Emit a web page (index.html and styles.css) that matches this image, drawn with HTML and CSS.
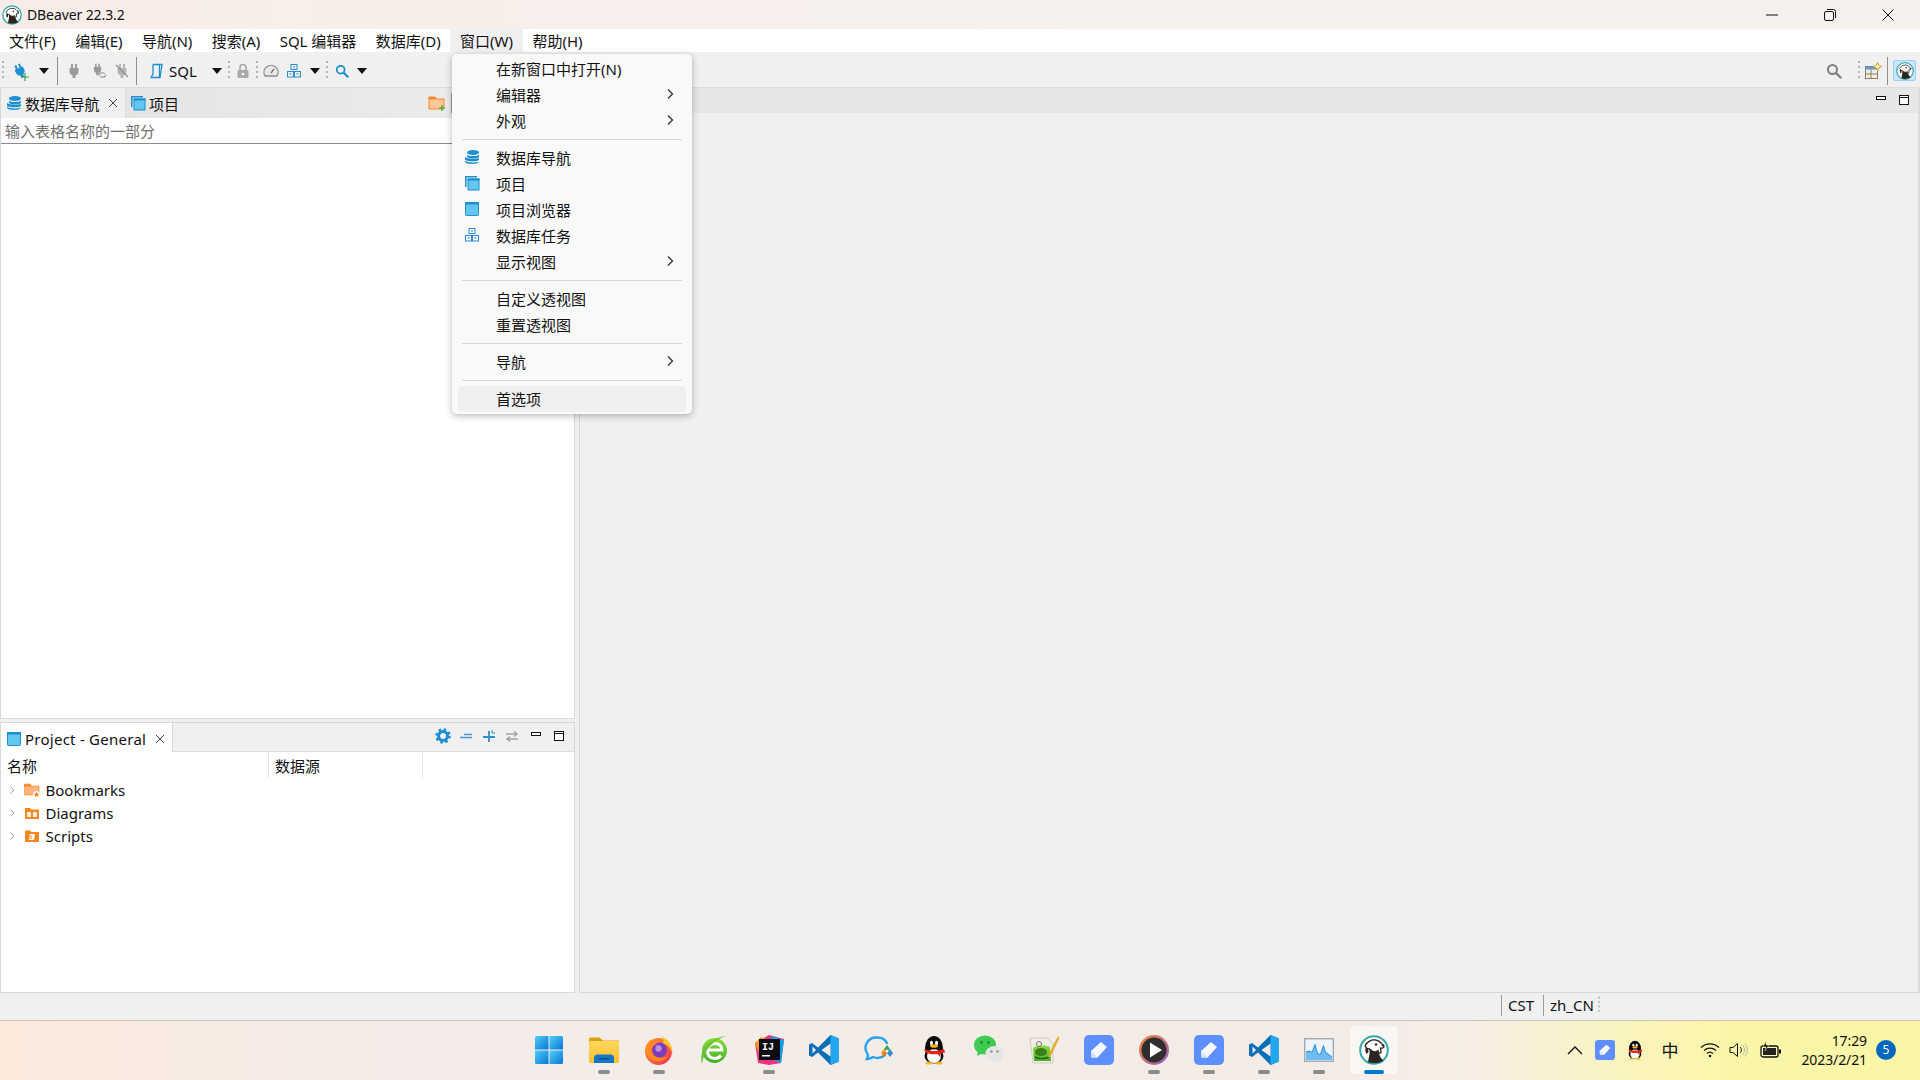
FILE: index.html
```html
<!DOCTYPE html>
<html lang="zh-CN">
<head>
<meta charset="utf-8">
<title>DBeaver 22.3.2</title>
<link rel="stylesheet" href="styles.css">
</head>
<body>
<svg class="defs" xmlns="http://www.w3.org/2000/svg">
  <defs>
    <linearGradient id="gWin" x1="0" y1="0" x2="1" y2="1"><stop offset="0" stop-color="#4fd0fb"/><stop offset="1" stop-color="#0a74d2"/></linearGradient>
    <linearGradient id="gFolder" x1="0" y1="0" x2="0" y2="1"><stop offset="0" stop-color="#ffd75e"/><stop offset="1" stop-color="#fbc02d"/></linearGradient>
    <linearGradient id="gFox" x1="0" y1="0" x2="1" y2="1"><stop offset="0" stop-color="#ff9a25"/><stop offset="1" stop-color="#f0305a"/></linearGradient>
    <linearGradient id="gRing" x1="0" y1="0" x2="1" y2="1"><stop offset="0" stop-color="#f58a2e"/><stop offset="1" stop-color="#8f5ac8"/></linearGradient>
    <linearGradient id="gGreen" x1="0" y1="0" x2="0" y2="1"><stop offset="0" stop-color="#8fdc3c"/><stop offset="1" stop-color="#45b02a"/></linearGradient>

    <symbol id="plug" viewBox="0 0 16 16"><path fill="currentColor" d="M5 1h2v4h2V1h2v4h1.500v3.500a4 4 0 0 1-3 3.700V15h-3v-2.800a4 4 0 0 1-3-3.700V5H5z"/></symbol>
    <symbol id="db" viewBox="0 0 16 16"><g fill="#1d8fd1"><ellipse cx="9" cy="3.500" rx="6" ry="2.500"/><path d="M3 5.500c1 2 11 2 12 0v2.300c-1 2.200-11 2.200-12 0z"/><path d="M1 7.800c1 2 12 2.600 14 1v2.200c-2 2-13 1.600-14-.6z"/><path d="M1 11.500c1 2 12 2.600 14 1V13c-1 2.500-13 2.500-14 0z"/></g></symbol>
    <symbol id="proj" viewBox="0 0 16 16"><path fill="none" stroke="#1d8fd1" stroke-width="1.500" d="M1.800 12V1.800H13"/><rect x="4" y="4" width="11" height="11" fill="#63c6ee" stroke="#1d8fd1"/><rect x="3.500" y="3.500" width="12" height="2" fill="#1d8fd1"/></symbol>
    <symbol id="win" viewBox="0 0 16 16"><rect x="1.500" y="1.500" width="13" height="13" rx="1" fill="#63c6ee" stroke="#1d8fd1"/><rect x="1" y="1" width="14" height="2.500" fill="#1d8fd1"/></symbol>
    <symbol id="boxes" viewBox="0 0 16 16"><g fill="none" stroke="#2c8ccf"><rect x="5" y="1.500" width="6" height="5"/><rect x="1.500" y="8.500" width="6" height="5.500"/><rect x="8.500" y="8.500" width="6" height="5.500"/><path d="M7 4h2M3.500 11h2M10.500 11h2"/></g></symbol>
    <symbol id="sqlfile" viewBox="0 0 16 16"><g fill="none" stroke="#1d8fd1" stroke-width="1.300"><path d="M5 1.500h9L12 14.500H2.500"/><path d="M5 1.500V11l-2 3.500M11.500 2v12"/></g></symbol>
    <symbol id="lens" viewBox="0 0 16 16"><circle cx="6.500" cy="6.500" r="4.500" fill="none" stroke="currentColor" stroke-width="2"/><path d="M10 10l4.500 4.500" stroke="currentColor" stroke-width="2.400" stroke-linecap="round"/></symbol>
    <symbol id="caret" viewBox="0 0 10 6"><path d="M0 0h10L5 6z" fill="#111"/></symbol>
    <symbol id="chev" viewBox="0 0 8 12"><path d="M2 1.500L6.500 6 2 10.500" fill="none" stroke="#333" stroke-width="1.300"/></symbol>
    <symbol id="x" viewBox="0 0 10 10"><path d="M1 1l8 8M9 1l-8 8" stroke="#444" stroke-width="1"/></symbol>
    <symbol id="vmin" viewBox="0 0 12 12"><rect x="1.500" y="2.500" width="9" height="3" fill="#fff" stroke="#111"/></symbol>
    <symbol id="vmax" viewBox="0 0 12 12"><rect x="1.500" y="1.500" width="9" height="9" fill="#fff" stroke="#111"/><path d="M1.500 3.500h9" stroke="#111"/></symbol>
    <symbol id="grip" viewBox="0 0 3 24"><g fill="#b9b3a8"><rect y="2" width="2" height="2"/><rect y="7" width="2" height="2"/><rect y="12" width="2" height="2"/><rect y="17" width="2" height="2"/></g></symbol>

    <symbol id="t-win" viewBox="0 0 30 30"><g fill="url(#gWin)"><path d="M1 2.500A1.500 1.500 0 0 1 2.500 1H14.500V14.500H1z"/><path d="M15.500 1H27.500A1.500 1.500 0 0 1 29 2.500V14.500H15.500z"/><path d="M1 15.500H14.500V29H2.500A1.500 1.500 0 0 1 1 27.500z"/><path d="M15.500 15.500H29V27.500A1.500 1.500 0 0 1 27.500 29H15.500z"/></g></symbol>
    <symbol id="t-folder" viewBox="0 0 30 30"><path d="M0 4a1.500 1.500 0 0 1 1.500-1.500h9L14 5.500h16V10H0z" fill="#dba10e"/><rect y="6" width="30" height="22" rx="1.500" fill="url(#gFolder)"/><path d="M5 28v-5a3.500 3.500 0 0 1 3.500-3.500h13a3.500 3.500 0 0 1 3.500 3.500v5z" fill="#1577c4"/><rect x="10" y="23" width="10" height="1.500" fill="#0b4f8c"/></symbol>
    <symbol id="t-fox" viewBox="0 0 30 30"><circle cx="14.500" cy="16.500" r="13.500" fill="url(#gFox)"/><path d="M17 1c7 3 12 9 11.500 17.500-1.500-5-5-9-9.500-10 1.500-2.500 0-5-2-7.500z" fill="#ffc62e"/><circle cx="15.500" cy="15" r="7.500" fill="#7b3cbb"/><circle cx="14.500" cy="13.500" r="3.200" fill="#c08ae0"/><path d="M1.500 13c1-4.500 3.500-7 6-8-.5 2.500 1.500 3.500 7 4-4 .5-6.500 2-7 5.500 0 4.500 4 8.500 9.500 8.500 3 0 5.500-1 7-2.500-2 4-6 6-10 5.500C7 26 .5 20 1.500 13z" fill="#ff8a1f"/></symbol>
    <symbol id="t-ie" viewBox="0 0 30 30"><circle cx="15" cy="15.500" r="14" fill="#eef2ea"/><circle cx="15.500" cy="15.500" r="12.500" fill="url(#gGreen)"/><path d="M9 15h14c0-9-14.500-8.500-14.500 1 0 8 9.500 9.500 13.500 4.500" fill="none" stroke="#fff" stroke-width="3"/><path d="M3 29C-1 16 10 3 27 1 14 5 5 15 3 29z" fill="#6cc33a"/></symbol>
    <symbol id="t-ij" viewBox="0 0 30 30"><path d="M1 8L15 0l15 4-3 24-12 2-11-2z" fill="#f0337f"/><path d="M17 1l13 4-3 23-6-2z" fill="#0e9fe6"/><path d="M1 8l6-6 8 3L5 18z" fill="#ff9b1c"/><rect x="5" y="4" width="21" height="21" fill="#0c0d12"/><rect x="8" y="20" width="8" height="1.500" fill="#fff"/></symbol>
    <symbol id="t-vs" viewBox="0 0 30 30"><path d="M21.500 0L9 12.500 3 8 0 9.500v11L3 22l6-4.500L21.500 30 30 26.500V3.500z" fill="#0b6fb8"/><path d="M21.500 0L30 3.500v23L21.500 30z" fill="#23a6ee"/><path d="M21.500 8.500L12.500 15l9 6.500z" fill="#f2ece8"/><path d="M3.500 11.500L7 15l-3.500 3.500z" fill="#f2ece8"/></symbol>
    <symbol id="t-msg" viewBox="0 0 30 30"><path d="M13 2.500A10.500 10.500 0 0 0 3.500 19c.5 1 .5 2.500-.5 5 3-.3 5-1.300 6-2 4 1.500 9 .8 12-2M23 8A10.500 10.500 0 0 0 13 2.500" fill="none" stroke="#29a0f0" stroke-width="2.400" stroke-linecap="round"/><path d="M23 10l3 4-3 4-3-4z" fill="#3aa84a"/><path d="M20 14l3 4-3 4-3-4z" fill="#f29b1d"/><path d="M26 14l3 4-3 4-3-4z" fill="#2f8be0"/><path d="M23 18l-3 4h-1l1-5z" fill="#ef6b1c"/><circle cx="23" cy="16" r="1.500" fill="#f2ece8"/></symbol>
    <symbol id="t-qq" viewBox="0 0 30 30"><ellipse cx="15" cy="13" rx="9" ry="12" fill="#0b0b0b"/><ellipse cx="15" cy="21" rx="9.500" ry="7.500" fill="#0b0b0b"/><ellipse cx="15" cy="21" rx="7" ry="7" fill="#fff"/><ellipse cx="15" cy="9.500" rx="5" ry="5" fill="#0b0b0b"/><ellipse cx="12.500" cy="8" rx="1.500" ry="2.200" fill="#fff"/><ellipse cx="17.500" cy="8" rx="1.500" ry="2.200" fill="#fff"/><ellipse cx="15" cy="11" rx="4" ry="1.800" fill="#f4b21f"/><path d="M5 14c5 2.500 15 2.500 20 0l1 3.500-5 1 .5 4-3-3.500c-3 .7-7 .5-12-1.500z" fill="#e3231a"/><ellipse cx="10" cy="28" rx="3.500" ry="1.500" fill="#f4b21f"/><ellipse cx="20" cy="28" rx="3.500" ry="1.500" fill="#f4b21f"/></symbol>
    <symbol id="t-wx" viewBox="0 0 30 30"><ellipse cx="11" cy="10" rx="11" ry="9.500" fill="#3ecb54"/><path d="M4 16l-1 5 6-3z" fill="#3ecb54"/><circle cx="7.500" cy="7.500" r="1.400" fill="#1d8f34"/><circle cx="14.500" cy="7.500" r="1.400" fill="#1d8f34"/><ellipse cx="20.500" cy="18.500" rx="9" ry="7.500" fill="#e3e5e6"/><path d="M25 24l2 4-6-2z" fill="#e3e5e6"/><circle cx="17.500" cy="16.500" r="1.200" fill="#8f9497"/><circle cx="23.500" cy="16.500" r="1.200" fill="#8f9497"/></symbol>
    <symbol id="t-npp" viewBox="0 0 30 30"><path d="M1 3h17l6 5v20H4z" fill="#efeee2" stroke="#b8b6a4" stroke-width=".6"/><path d="M4 13c5-3 10-3 17-1l1 14H5z" fill="url(#gGreen)"/><ellipse cx="12" cy="17" rx="6" ry="4" fill="#3a7d1c"/><circle cx="10" cy="9" r="2.500" fill="none" stroke="#777"/><path d="M6 22c4 2 10 2 14 0" stroke="#2a5a10" stroke-width="1.500" fill="none"/><path d="M29 1l-9 18-1.500 4 3.500-2.500L30.500 3z" fill="#e3a92a"/></symbol>
    <symbol id="t-note" viewBox="0 0 30 30"><rect width="30" height="30" rx="5" fill="#5d8fff"/><path d="M17 7l6 5-9.500 10.500H7.500L7 16z" fill="#fff" opacity=".95"/><path d="M7.500 22.500L7 16l6.500 6.500z" fill="#d6e3ff"/></symbol>
    <symbol id="t-play" viewBox="0 0 30 30"><circle cx="15" cy="15" r="15" fill="url(#gRing)"/><circle cx="15" cy="15" r="12.500" fill="#2f2d2d"/><path d="M11 7.500L23 15l-12 7.500z" fill="#fff"/></symbol>
    <symbol id="t-chart" viewBox="0 0 30 30"><rect x=".7" y="3.700" width="28.600" height="22.600" fill="#eef4fb" stroke="#a4a9ae" stroke-width="1.400"/><path d="M2 24v-7l4-1 2 1.500 3-8 2.500 9 3 1 3-9 2 7 2.500 1.500 4 3V25H2z" fill="#6ebdf2"/><path d="M2 17l4-1 2 1.500 3-8 2.500 9 3 1 3-9 2 7 2.500 1.500 4 3" fill="none" stroke="#2b8fd8"/></symbol>
    <symbol id="beaver" viewBox="0 0 30 30"><circle cx="15" cy="15" r="13.800" fill="#fff" stroke="#35a8ac" stroke-width="2"/><path d="M9 27l1.500-8c.3-2 .3-4-.5-6l9 4 3 6 2.500 2.500C19.500 28.500 14 29 9 27z" fill="#2b2421"/><path d="M6 11c1.500-4 6-6.500 10.500-6 2.500.3 4.500 1.500 6 3.500 1.500.8 2.500 2 2.500 3 0 1.500-2 2-3.500 1.500l.5 4.500-2 1-1-3-2 1.500c-3 0-5-1-6.500-3-1.500 0-3-.5-4.500-3z" fill="#fff" stroke="#2b2421" stroke-width="1.300"/><path d="M6.500 13c-.5 2 0 4 1 6l2-2-.5-3.500z" fill="#2b2421"/><circle cx="17" cy="9.500" r="1.200" fill="#2b2421"/><ellipse cx="24" cy="10.500" rx="1.400" ry="1" fill="#2b2421"/></symbol>

    <symbol id="f-book" viewBox="0 0 16 16"><path d="M0 3a1 1 0 0 1 1-1h5l2 2h7v9H1a1 1 0 0 1-1-1z" fill="#fdb37b" stroke="#f5871f" stroke-width=".6"/><path d="M0 2.500h6l1.500 2H0z" fill="#f5871f"/><circle cx="12.500" cy="12.500" r="3.500" fill="#fff"/><path d="M12.500 9.800l.9 1.800 1.900.2-1.400 1.300.4 1.900-1.800-1-1.800 1 .4-1.900-1.400-1.300 1.900-.2z" fill="#f5871f"/></symbol>
    <symbol id="f-dia" viewBox="0 0 16 16"><path d="M1 3h5l1.500 1.500H15V14H1z" fill="#f5871f"/><rect x="2.800" y="6.500" width="4.500" height="6" fill="#fff" stroke="#f5871f"/><rect x="8.700" y="6.500" width="4.500" height="6" fill="#fff" stroke="#f5871f"/></symbol>
    <symbol id="f-scr" viewBox="0 0 16 16"><path d="M1 2.500h5L7.500 4H15v10H1z" fill="#f5871f"/><path d="M6 6h5l-1 6H5z" fill="#fff"/><path d="M7 7.500v3.500" stroke="#f5871f"/></symbol>
    <symbol id="f-new" viewBox="0 0 18 18"><path d="M1 3h6l2 2h7v10H1z" fill="#fdc79a" stroke="#f5871f"/><rect x="1" y="3" width="7" height="2.500" fill="#f5871f"/><path d="M14 11v6M11 14h6" stroke="#27a844" stroke-width="1.200"/></symbol>
    <symbol id="persp" viewBox="0 0 18 18"><rect x="1.500" y="4.500" width="12" height="12" fill="#f3eee0" stroke="#8a7f68"/><rect x="1.500" y="4.500" width="12" height="3" fill="#5a9bd4"/><path d="M7 7.500v9M1.500 12h12" stroke="#8a7f68"/><path d="M13.500 .5l1.200 2.700 2.800 1.300-2.800 1.300-1.200 2.700-1.200-2.700L9.500 4.500l2.800-1.300z" fill="#fff3c4" stroke="#d8a320"/></symbol>
  </defs>
</svg>

<div class="app">
  <header class="titlebar">
    <svg class="tb-logo"><use href="#beaver"/></svg>
    <span class="title-text">DBeaver 22.3.2</span>
    <span class="spacer"></span>
    <div class="winctl">
      <span class="winbtn"><svg class="wi" viewBox="0 0 12 12"><path d="M0 6h12" stroke="#111"/></svg></span>
      <span class="winbtn"><svg class="wi" viewBox="0 0 12 12"><rect x=".5" y="2.500" width="9" height="9" rx="1.500" fill="none" stroke="#111"/><path d="M3 .5h6.500a2 2 0 0 1 2 2V9" fill="none" stroke="#111"/></svg></span>
      <span class="winbtn"><svg class="wi" viewBox="0 0 12 12"><path d="M.5.500l11 11M11.500.500l-11 11" stroke="#111"/></svg></span>
    </div>
  </header>

  <nav class="menubar">
    <span class="mi">文件(F)</span>
    <span class="mi">编辑(E)</span>
    <span class="mi">导航(N)</span>
    <span class="mi">搜索(A)</span>
    <span class="mi">SQL 编辑器</span>
    <span class="mi">数据库(D)</span>
    <span class="mi mi-open">窗口(W)</span>
    <span class="mi">帮助(H)</span>
  </nav>

  <div class="toolbar">
    <span class="cell w4"><svg class="grip"><use href="#grip"/></svg></span>
    <span class="cell w30 pl-add"><svg class="i16 c-blue tiltb"><use href="#plug"/></svg><svg class="addmark" viewBox="0 0 8 8"><path d="M4 0v8M0 4h8" stroke="#27a844" stroke-width="1.200"/></svg></span>
    <span class="cell w18"><svg class="caret"><use href="#caret"/></svg></span>
    <span class="cell w8"><i class="sep"></i></span>
    <span class="cell w26"><svg class="i16 c-gray"><use href="#plug"/></svg></span>
    <span class="cell w24"><svg class="i16" viewBox="0 0 16 16"><use href="#plug" width="13" height="13" class="c-gray"/><path d="M8 12a3.500 3.500 0 0 1 6-1M15 12a3.500 3.500 0 0 1-6 1" fill="none" stroke="#8f8f8f" stroke-width="1.100"/></svg></span>
    <span class="cell w22"><svg class="i16" viewBox="0 0 16 16"><use href="#plug" class="c-lgray"/><path d="M2 2l12 12" stroke="#8f8f8f" stroke-width="1.300"/></svg></span>
    <span class="cell w6"><i class="sep"></i></span>
    <span class="sqlgroup"><svg class="i16"><use href="#sqlfile"/></svg><span class="sqltext">SQL</span></span>
    <span class="cell w20"><svg class="caret"><use href="#caret"/></svg></span>
    <span class="cell w4"><svg class="grip"><use href="#grip"/></svg></span>
    <span class="cell w24"><svg class="i16" viewBox="0 0 16 16"><rect x="2.500" y="7" width="11" height="8" rx="1.500" fill="#a9a9a9"/><path d="M5 7V4.500a3 3 0 0 1 6 0V7" fill="none" stroke="#a9a9a9" stroke-width="1.600"/><circle cx="8" cy="11" r="1.300" fill="#fff"/></svg></span>
    <span class="cell w4"><svg class="grip"><use href="#grip"/></svg></span>
    <span class="cell w24"><svg class="i16" viewBox="0 0 16 16"><path d="M2 13a7 7 0 1 1 12 0z" fill="#e8e8e8" stroke="#8f8f8f" stroke-width="1.300"/><path d="M8 10l3-4" stroke="#777" stroke-width="1.300"/></svg></span>
    <span class="cell w22"><svg class="i16"><use href="#boxes"/></svg></span>
    <span class="cell w20"><svg class="caret"><use href="#caret"/></svg></span>
    <span class="cell w4"><svg class="grip"><use href="#grip"/></svg></span>
    <span class="cell w26"><svg class="i14 c-blue"><use href="#lens"/></svg></span>
    <span class="cell w14"><svg class="caret"><use href="#caret"/></svg></span>
    <span class="spacer"></span>
    <span class="cell w24"><svg class="i16 c-dgray"><use href="#lens"/></svg></span>
    <span class="cell w11"></span>
    <span class="cell w4"><svg class="grip"><use href="#grip"/></svg></span>
    <span class="cell w24"><svg class="i18"><use href="#persp"/></svg></span>
    <span class="cell w4"><i class="sep"></i></span>
    <span class="cell w4"></span>
    <span class="persp-active"><svg class="i18"><use href="#beaver"/></svg></span>
  </div>

  <main class="workbench">
    <div class="leftcol">
      <section class="pane pane-nav">
        <div class="tabstrip">
          <span class="tab tab-active tab-nav"><svg class="i16"><use href="#db"/></svg><span class="tablabel">数据库导航</span><svg class="closex"><use href="#x"/></svg></span>
          <span class="tab tab-proj"><svg class="i16"><use href="#proj"/></svg><span class="tablabel">项目</span></span>
          <span class="spacer"></span>
          <span class="tabaction"><svg class="i18"><use href="#f-new"/></svg><i class="tabsep"></i></span>
        </div>
        <div class="filter">输入表格名称的一部分</div>
        <div class="pane-body"></div>
      </section>
      <section class="pane pane-project">
        <div class="tabstrip2">
          <span class="tab2"><svg class="i16"><use href="#win"/></svg><span class="tablabel">Project - General</span><svg class="closex"><use href="#x"/></svg></span>
          <span class="spacer"></span>
          <span class="viewtools">
            <svg class="i16" viewBox="0 0 16 16"><circle cx="8" cy="8" r="4.500" fill="none" stroke="#1d8fd1" stroke-width="3"/><circle cx="8" cy="8" r="6.500" fill="none" stroke="#1d8fd1" stroke-width="2.500" stroke-dasharray="2.500 2.600"/></svg>
            <svg class="i16" viewBox="0 0 16 16"><path d="M2 9.500h12M6 6.500h8" stroke="#4a9ad4" stroke-width="1.600"/></svg>
            <svg class="i16" viewBox="0 0 16 16"><path d="M2 9h12M8 3v11" stroke="#2f8fd0" stroke-width="1.800"/><path d="M11 2v3h3" fill="none" stroke="#2f8fd0"/></svg>
            <svg class="i16" viewBox="0 0 16 16"><path d="M2 6h10M10 3.500L13 6l-3 2.500M14 11H4M6 8.500L3 11l3 2.500" fill="none" stroke="#a3a3a3" stroke-width="1.500"/></svg>
            <svg class="i12"><use href="#vmin"/></svg>
            <svg class="i12"><use href="#vmax"/></svg>
          </span>
        </div>
        <div class="colhead">
          <span class="col col-name">名称</span>
          <span class="col col-ds">数据源</span>
          <span class="col col-rest"></span>
        </div>
        <div class="treerow"><svg class="twisty"><use href="#chev"/></svg><svg class="i16"><use href="#f-book"/></svg><span>Bookmarks</span></div>
        <div class="treerow"><svg class="twisty"><use href="#chev"/></svg><svg class="i16"><use href="#f-dia"/></svg><span>Diagrams</span></div>
        <div class="treerow"><svg class="twisty"><use href="#chev"/></svg><svg class="i16"><use href="#f-scr"/></svg><span>Scripts</span></div>
      </section>
    </div>
    <section class="editor">
      <div class="editor-head">
        <svg class="i12"><use href="#vmin"/></svg>
        <svg class="i12"><use href="#vmax"/></svg>
      </div>
    </section>
  </main>

  <footer class="statusbar">
    <span class="st st-a">CST</span>
    <span class="st st-b">zh_CN</span>
    <svg class="stgrip"><use href="#grip"/></svg>
  </footer>

  <div class="taskbar">
    <span></span>
    <div class="apps">
      <span class="app-i"><svg class="ti"><use href="#t-win"/></svg></span>
      <span class="app-i run"><svg class="ti"><use href="#t-folder"/></svg></span>
      <span class="app-i run"><svg class="ti"><use href="#t-fox"/></svg></span>
      <span class="app-i"><svg class="ti"><use href="#t-ie"/></svg></span>
      <span class="app-i run"><svg class="ti" viewBox="0 0 30 30"><use href="#t-ij" width="30" height="30"/><text x="8" y="15" class="ijtext">IJ</text></svg></span>
      <span class="app-i"><svg class="ti"><use href="#t-vs"/></svg></span>
      <span class="app-i"><svg class="ti"><use href="#t-msg"/></svg></span>
      <span class="app-i"><svg class="ti"><use href="#t-qq"/></svg></span>
      <span class="app-i"><svg class="ti"><use href="#t-wx"/></svg></span>
      <span class="app-i"><svg class="ti"><use href="#t-npp"/></svg></span>
      <span class="app-i"><svg class="ti"><use href="#t-note"/></svg></span>
      <span class="app-i run"><svg class="ti"><use href="#t-play"/></svg></span>
      <span class="app-i run"><svg class="ti"><use href="#t-note"/></svg></span>
      <span class="app-i run"><svg class="ti"><use href="#t-vs"/></svg></span>
      <span class="app-i run"><svg class="ti"><use href="#t-chart"/></svg></span>
      <span class="app-i active"><svg class="ti"><use href="#beaver"/></svg></span>
    </div>
    <div class="tray">
      <svg class="tr-chev" viewBox="0 0 16 10"><path d="M1 9l7-7 7 7" fill="none" stroke="#111" stroke-width="1.300"/></svg>
      <svg class="tr-20"><use href="#t-note"/></svg>
      <svg class="tr-20 tr-qq"><use href="#t-qq"/></svg>
      <span class="ime">中</span>
      <svg class="tr-wifi" viewBox="0 0 20 16"><path d="M1 5.500a13 13 0 0 1 18 0M4 8.500a9 9 0 0 1 12 0M7 11.500a4.500 4.500 0 0 1 6 0" fill="none" stroke="#111" stroke-width="1.200"/><circle cx="10" cy="14" r="1.300" fill="#111"/></svg>
      <svg class="tr-vol" viewBox="0 0 20 16"><path d="M1 5.500h3L8.500 1.500v13L4 10.500H1z" fill="none" stroke="#111"/><path d="M11 5a4 4 0 0 1 0 6" fill="none" stroke="#222"/><path d="M13.500 3a7 7 0 0 1 0 10M16 1.500a10 10 0 0 1 0 13" fill="none" stroke="#b9b9a0"/></svg>
      <svg class="tr-bat" viewBox="0 0 22 18"><rect x="1" y="5" width="17" height="11" rx="2" fill="#fff8b0" stroke="#111" stroke-width="1.300"/><rect x="3" y="7" width="13" height="7" fill="#222"/><rect x="19" y="8.500" width="2" height="4" fill="#111"/><path d="M6 0L3 6h3l-1 4 4-6H6z" fill="#111" stroke="#faf6a8" stroke-width=".5"/></svg>
      <div class="clock"><span>17:29</span><span>2023/2/21</span></div>
      <span class="notif">5</span>
    </div>
  </div>

  <div class="popup">
    <div class="p-row p-first"><span class="p-slot"></span>在新窗口中打开(N)</div>
    <div class="p-row"><span class="p-slot"></span>编辑器<svg class="p-chev"><use href="#chev"/></svg></div>
    <div class="p-row"><span class="p-slot"></span>外观<svg class="p-chev"><use href="#chev"/></svg></div>
    <div class="p-sep"></div>
    <div class="p-row"><span class="p-slot"><svg class="i16"><use href="#db"/></svg></span>数据库导航</div>
    <div class="p-row"><span class="p-slot"><svg class="i16"><use href="#proj"/></svg></span>项目</div>
    <div class="p-row"><span class="p-slot"><svg class="i16"><use href="#win"/></svg></span>项目浏览器</div>
    <div class="p-row"><span class="p-slot"><svg class="i16"><use href="#boxes"/></svg></span>数据库任务</div>
    <div class="p-row"><span class="p-slot"></span>显示视图<svg class="p-chev"><use href="#chev"/></svg></div>
    <div class="p-sep"></div>
    <div class="p-row"><span class="p-slot"></span>自定义透视图</div>
    <div class="p-row"><span class="p-slot"></span>重置透视图</div>
    <div class="p-sep"></div>
    <div class="p-row"><span class="p-slot"></span>导航<svg class="p-chev"><use href="#chev"/></svg></div>
    <div class="p-sep"></div>
    <div class="p-row p-hot"><span class="p-slot"></span>首选项</div>
  </div>
</div>
</body>
</html>
```

FILE: styles.css
```css
* { box-sizing: border-box; }
html, body { margin: 0; padding: 0; }
body {
  font-family: "Noto Sans", "Noto Sans CJK SC", sans-serif;
  font-size: 15px;
  color: #111;
  overflow: hidden;
}
.defs { display: block; width: 0; height: 0; }
.app { position: relative; width: 1920px; height: 1080px; display: flex; flex-direction: column; background: #f0f0f0; overflow: hidden; }
.spacer { flex: 1; }

.titlebar { height: 29px; flex: none; display: flex; align-items: center; background: linear-gradient(90deg, #f8ece8, #f5f1ed 60%); padding-left: 2px; }
.tb-logo { width: 20px; height: 20px; }
.title-text { margin-left: 5px; font-size: 14px; letter-spacing: -0.1px; }
.winctl { display: flex; height: 29px; padding-right: 3px; }
.winbtn { width: 58px; display: flex; align-items: center; justify-content: center; }
.wi { width: 12px; height: 12px; }

.menubar { height: 23px; flex: none; display: flex; align-items: center; background: #fff; }
.mi { height: 23px; padding: 0 9.7px; display: flex; align-items: center; white-space: nowrap; }
.mi:first-child { padding-left: 9px; }
.mi-open { background: #f0f0f0; }

.toolbar { height: 36px; flex: none; display: flex; align-items: center; padding: 2px 4px 0 1px; background: #f0f0f0; border-bottom: 1px solid #dcdcdc; }
.cell { display: flex; align-items: center; justify-content: center; height: 30px; flex: none; }
.w4 { width: 4px; } .w6 { width: 6px; } .w8 { width: 8px; } .w11 { width: 11px; } .w14 { width: 14px; }
.w18 { width: 18px; } .w20 { width: 20px; } .w22 { width: 22px; } .w24 { width: 24px; } .w26 { width: 26px; } .w30 { width: 30px; }
.sep { display: block; width: 1px; height: 28px; background: #8f8f8f; }
.grip { width: 3px; height: 24px; flex: none; }
.caret { width: 10px; height: 6px; }
.i12 { width: 12px; height: 12px; flex: none; }
.i14 { width: 14px; height: 14px; flex: none; }
.i16 { width: 16px; height: 16px; flex: none; }
.i18 { width: 18px; height: 18px; flex: none; }
.c-blue { color: #1d8fd1; } .c-gray { color: #9a9a9a; } .c-lgray { color: #b5b5b5; } .c-dgray { color: #7f7f7f; }
.tiltb { transform: rotate(-25deg); }
.pl-add { position: relative; }
.addmark { position: absolute; left: 16px; top: 17px; width: 8px; height: 8px; }
.sqlgroup { display: flex; align-items: center; width: 68px; padding-left: 9px; flex: none; }
.sqltext { margin-left: 5px; font-size: 15px; }
.persp-active { width: 23px; height: 21px; display: flex; align-items: center; justify-content: center; background: #cbe6fb; border: 1px solid #99d1ff; border-radius: 2px; flex: none; }

.workbench { flex: 1; display: flex; min-height: 0; gap: 4px; }
.leftcol { width: 575px; flex: none; display: flex; flex-direction: column; gap: 3px; }
.pane { background: #fff; border: 1px solid #d8d8d8; border-top: 0; display: flex; flex-direction: column; }
.pane-nav { height: 631px; flex: none; }
.pane-project { flex: 1; border-top: 1px solid #d8d8d8; }

.tabstrip { height: 30px; flex: none; display: flex; align-items: stretch; background: linear-gradient(90deg, #e2e2e2, #ededed); }
.tab { display: flex; align-items: center; white-space: nowrap; }
.tab-nav { width: 125px; padding-left: 5px; background: #f0f0f0; border-right: 1px solid #dcdcdc; }
.tab-proj { padding-left: 4px; }
.tablabel { margin-left: 3px; letter-spacing: -0.1px; }
.closex { width: 10px; height: 10px; margin-left: 8px; flex: none; }
.tabaction { margin-right: 122px; display: flex; align-items: center; gap: 5px; }
.tabsep { display: block; width: 1px; height: 20px; background: #9a9a9a; }
.filter { height: 26px; flex: none; padding-left: 4px; display: flex; align-items: center; background: #fff; color: #6f6f6f; border-bottom: 1px solid #8a8a8a; }
.pane-body { flex: 1; }

.tabstrip2 { height: 29px; flex: none; display: flex; background: #f0f0f0; border-bottom: 1px solid #dcdcdc; }
.tab2 { width: 172px; display: flex; align-items: center; padding: 2px 0 0 5px; background: #fff; border-right: 1px solid #d8d8d8; margin-bottom: -1px; white-space: nowrap; }
.tab2 .closex { margin-left: 9px; }
.tab2 .tablabel { letter-spacing: 0.25px; }
.viewtools { display: flex; align-items: center; gap: 7px; padding-right: 9px; height: 26px; }
.viewtools .i12 { margin-left: 3px; }
.viewtools .i12:last-child { margin-left: 4px; }
.colhead { height: 26px; flex: none; display: flex; }
.col { display: flex; align-items: center; padding-left: 6px; border-right: 1px solid #e4e4e4; }
.col-name { width: 268px; }
.col-ds { width: 154px; }
.col-rest { border: 0; }
.treerow { height: 23px; flex: none; display: flex; align-items: center; padding-left: 8px; }
.twisty { width: 6px; height: 10px; margin-right: 9px; opacity: .5; flex: none; }
.treerow span { margin-left: 5.5px; }

.editor { flex: 1; background: #f0f0f0; border-right: 2px solid #dcdcdc; border-bottom: 1px solid #d8d8d8; border-left: 1px solid #d8d8d8; }
.editor-head { height: 25px; display: flex; justify-content: flex-end; align-items: center; gap: 11px; padding: 0 8px 2px 0; background: #e6e6e6; }

.statusbar { height: 27px; flex: none; display: flex; align-items: center; padding: 0 0 3px 1501px; background: #f0f0f0; }
.st { height: 21px; display: flex; align-items: center; border-left: 1px solid #9a9a9a; padding-left: 6px; }
.st-a { width: 42px; }
.st-b { width: 55px; }
.stgrip { width: 3px; height: 21px; }

.taskbar { height: 60px; flex: none; display: grid; grid-template-columns: 1fr 873px 1fr; align-items: center; padding-bottom: 2px; border-top: 1px solid #c9c2b8; background: linear-gradient(90deg, #fbeadc 0, #f4ece8 20%, #f3ece6 70%, #f8eee4 77%, #f9f3c0 84%, #faf6a8 90%, #faf6a8 100%); }
.apps { display: flex; gap: 7px; justify-content: center; padding-left: 3px; }
.app-i { position: relative; width: 48px; height: 48px; display: flex; align-items: center; justify-content: center; border-radius: 4px; flex: none; }
.ti { width: 30px; height: 30px; }
.ijtext { font: 700 10px "Liberation Mono", monospace; fill: #fff; }
.run::after { content: ""; position: absolute; left: 18px; bottom: 0; width: 12px; height: 4px; border-radius: 2px; background: #8b8b8b; }
.active { background: #faf6f2; box-shadow: 0 0 0 1px #f0ebe6; }
.active::after { content: ""; position: absolute; left: 14px; bottom: 0; width: 20px; height: 4px; border-radius: 2px; background: #0078d4; }

.tray { display: flex; align-items: center; justify-content: flex-end; padding-right: 24px; }
.tr-chev { width: 16px; height: 10px; margin-right: 12px; flex: none; }
.tr-20 { width: 20px; height: 20px; flex: none; }
.tr-qq { margin-left: 10px; }
.ime { width: 20px; margin-left: 15px; font-size: 17px; display: flex; justify-content: center; }
.tr-wifi { width: 20px; height: 16px; margin-left: 20px; flex: none; }
.tr-vol { width: 20px; height: 16px; margin-left: 9px; flex: none; }
.tr-bat { width: 22px; height: 18px; margin-left: 11px; flex: none; }
.clock { display: flex; flex-direction: column; align-items: flex-end; width: 72px; margin-left: 13px; font-size: 14px; line-height: 19px; letter-spacing: -0.1px; }
.notif { width: 20px; height: 20px; margin-left: 9px; border-radius: 50%; background: #0067c0; color: #fff; font-size: 12px; display: flex; align-items: center; justify-content: center; }

.popup { position: absolute; left: 452px; top: 54px; width: 240px; height: 360px; padding: 3px 6px 2px; background: #f9f9f9; border-radius: 5px; box-shadow: 0 2px 7px rgba(0,0,0,.28); }
.p-row { height: 26px; display: flex; align-items: center; padding: 0 12px 2px 6px; border-radius: 4px; white-space: nowrap; }
.p-first { height: 25px; }
.p-slot { width: 16px; margin-right: 16px; display: flex; flex: none; }
.p-chev { width: 8px; height: 12px; margin-left: auto; }
.p-sep { height: 1px; margin: 5px 4px; background: #d8d8d8; }
.p-hot { background: #f0f0f0; }
```
